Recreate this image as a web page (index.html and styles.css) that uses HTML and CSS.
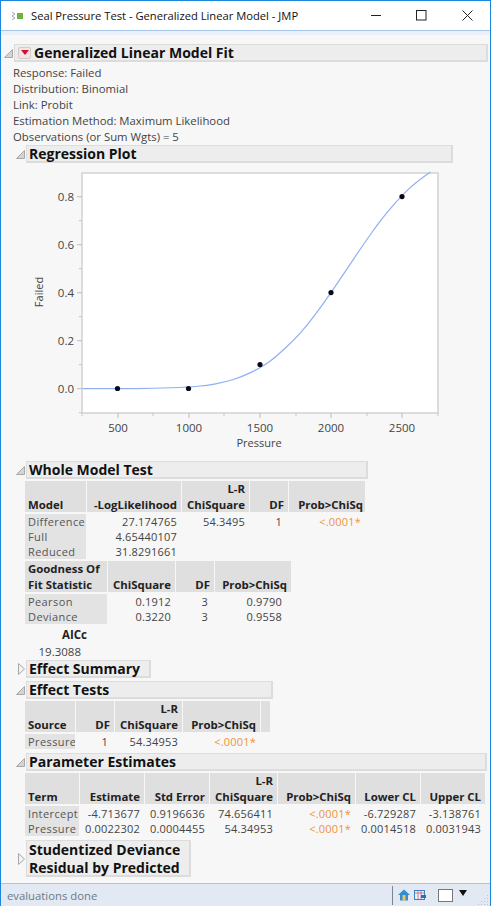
FILE: index.html
```html
<!DOCTYPE html>
<html lang="en">

<head>
    <meta charset="UTF-8">
    <title>Seal Pressure Test - Generalized Linear Model - JMP</title>
    <link rel="stylesheet" href="styles.css">
</head>

<body>
    <div class="window">
        <div class="titlebar">
            <svg class="app-icon" width="12" height="10" viewBox="0 0 12 10">
                <path d="M0 1l3 2-3 2 3 2-3 2" fill="none" stroke="#9aa5b5" />
                <rect x="5" y="2" width="6" height="6" fill="#6cb33f" />
            </svg>
            <span class="title">Seal Pressure Test - Generalized Linear Model - JMP</span>
            <svg class="win-btn btn-min" width="11" height="11" viewBox="0 0 11 11"><path d="M0 5.5h10" stroke="#222" /></svg>
            <svg class="win-btn btn-max" width="11" height="11" viewBox="0 0 11 11"><rect x=".5" y=".5" width="9.5" height="9.5" fill="none" stroke="#222" /></svg>
            <svg class="win-btn btn-close" width="11" height="11" viewBox="0 0 11 11"><path d="M.5.5l10 10M10.5.5l-10 10" stroke="#222" fill="none" /></svg>
        </div>
        <div class="band"></div>

        <div class="content">
            <div class="outline top">
                <svg class="tri" width="9" height="9" viewBox="0 0 9 9"><path d="M8.5.5v8h-8z" fill="#d4d4d4" stroke="#a8a8a8" /></svg>
                <div class="hdr hdr-main">
                    <span class="red-btn"><svg width="8" height="5" viewBox="0 0 8 5"><path d="M0 0h8L4 5z" fill="#d4102a" /></svg></span>
                    Generalized Linear Model Fit
                </div>
            </div>
            <div class="info">
                <div>Response: Failed</div>
                <div>Distribution: Binomial</div>
                <div>Link: Probit</div>
                <div>Estimation Method: Maximum Likelihood</div>
                <div>Observations (or Sum Wgts) = 5</div>
            </div>

            <div class="outline">
                <svg class="tri" width="9" height="9" viewBox="0 0 9 9"><path d="M8.5.5v8h-8z" fill="#d4d4d4" stroke="#a8a8a8" /></svg>
                <div class="hdr w-regress">Regression Plot</div>
            </div>

            <svg class="plot" width="489" height="297" viewBox="0 0 489 297">
                <!-- coordinates below are screen pixels, the group moves them into the svg -->
                <g transform="translate(-1 -164)">
                    <rect x="82" y="173" width="356" height="240" fill="#fff" stroke="#d2d2d2" stroke-width="1.5" />
                    <path d="M77 196.7h5M77 244.7h5M77 292.7h5M77 340.7h5M77 388.7h5M118 413v5M189 413v5M260 413v5M331 413v5M402 413v5" stroke="#bdbdbd" />
                    <path d="M79 220.7h3M79 268.7h3M79 316.7h3M79 364.7h3M79 412.7h3M82 413v3M153 413v3M224 413v3M296 413v3M367 413v3M438 413v3" stroke="#c8c8c8" />
                    <path fill="none" stroke="#8fb0f2" stroke-width="1.2"
                        d="M82.5 388.7L100.25 388.68Q118 388.66 135.75 388.53Q153.5 388.4 171.25 387.75Q189 387.1 197.9 386.25Q206.75 385.4 215.6 383.8Q224.5 382.2 233.4 379.45Q242.25 376.7 251.1 372.4Q260 368.1 267.1 363.3Q274.2 358.5 284.85 348.55Q295.5 338.6 300.85 332.45Q306.2 326.3 311.5 319.45Q316.8 312.6 323.9 302.65Q331 292.7 338.1 282.15Q345.2 271.6 350.55 263.6Q355.9 255.6 361.2 247.75Q366.5 239.9 371.85 232.5Q377.2 225.1 382.5 218.2Q387.8 211.3 394.9 203.3Q402 195.3 409.1 188.65Q416.2 182 430.4 172" />
                    <g fill="#0a0a14">
                        <circle cx="117.5" cy="388.5" r="2.6" />
                        <circle cx="188.5" cy="388.5" r="2.6" />
                        <circle cx="260" cy="364.6" r="2.6" />
                        <circle cx="331" cy="292.6" r="2.6" />
                        <circle cx="402" cy="196.6" r="2.6" />
                    </g>
                    <g class="tick-y">
                        <text x="74" y="201">0.8</text>
                        <text x="74" y="249">0.6</text>
                        <text x="74" y="297">0.4</text>
                        <text x="74" y="345">0.2</text>
                        <text x="74" y="393">0.0</text>
                    </g>
                    <g class="tick-x">
                        <text x="118" y="432">500</text>
                        <text x="189" y="432">1000</text>
                        <text x="260" y="432">1500</text>
                        <text x="331" y="432">2000</text>
                        <text x="402" y="432">2500</text>
                    </g>
                    <text class="axis-label" x="259" y="447">Pressure</text>
                    <text class="axis-label" transform="translate(43 292) rotate(-90)">Failed</text>
                </g>
            </svg>

            <div class="outline">
                <svg class="tri" width="9" height="9" viewBox="0 0 9 9"><path d="M8.5.5v8h-8z" fill="#d4d4d4" stroke="#a8a8a8" /></svg>
                <div class="hdr w-whole">Whole Model Test</div>
            </div>
            <table class="grid whole">
                <colgroup><col class="c61"><col class="c94"><col class="c67"><col class="c38"><col class="c76"></colgroup>
                <tr>
                    <th class="lab">Model</th><th>-LogLikelihood</th><th>L-R<br>ChiSquare</th><th>DF</th><th class="prob">Prob&gt;ChiSq</th>
                </tr>
                <tr><td class="lab">Difference</td><td>27.174765</td><td>54.3495</td><td class="df">1</td><td class="sig">&lt;.0001*</td></tr>
                <tr><td class="lab">Full</td><td>4.65440107</td><td></td><td></td><td></td></tr>
                <tr><td class="lab">Reduced</td><td>31.8291661</td><td></td><td></td><td></td></tr>
            </table>
            <table class="grid goodness">
                <colgroup><col class="c82"><col class="c67"><col class="c38"><col class="c76"></colgroup>
                <tr>
                    <th class="lab">Goodness Of<br>Fit Statistic</th><th>ChiSquare</th><th>DF</th><th>Prob&gt;ChiSq</th>
                </tr>
                <tr><td class="lab">Pearson</td><td>0.1912</td><td class="df">3</td><td class="far">0.9790</td></tr>
                <tr><td class="lab">Deviance</td><td>0.3220</td><td class="df">3</td><td class="far">0.9558</td></tr>
            </table>
            <div class="aicc">
                <div class="aicc-head">AICc</div>
                <div class="aicc-val">19.3088</div>
            </div>

            <div class="outline closed">
                <svg class="tri" width="9" height="12" viewBox="0 0 9 12"><path d="M1.5.5l6 5.5-6 5.5z" fill="#f2f2f2" stroke="#a8a8a8" /></svg>
                <div class="hdr w-summary">Effect Summary</div>
            </div>
            <div class="outline gap3">
                <svg class="tri" width="9" height="9" viewBox="0 0 9 9"><path d="M8.5.5v8h-8z" fill="#d4d4d4" stroke="#a8a8a8" /></svg>
                <div class="hdr w-tests">Effect Tests</div>
            </div>
            <table class="grid tests">
                <colgroup><col class="c50"><col class="c38"><col class="c67"><col class="c77"><col class="c9"></colgroup>
                <tr>
                    <th class="lab">Source</th><th>DF</th><th>L-R<br>ChiSquare</th><th>Prob&gt;ChiSq</th><th></th>
                </tr>
                <tr><td class="lab">Pressure</td><td class="df">1</td><td>54.34953</td><td class="sig">&lt;.0001*</td><td></td></tr>
            </table>

            <div class="outline gap4">
                <svg class="tri" width="9" height="9" viewBox="0 0 9 9"><path d="M8.5.5v8h-8z" fill="#d4d4d4" stroke="#a8a8a8" /></svg>
                <div class="hdr w-params">Parameter Estimates</div>
            </div>
            <table class="grid params">
                <colgroup><col class="c54"><col class="c64"><col class="c64"><col class="c67"><col class="c77"><col class="c64"><col class="c64"></colgroup>
                <tr>
                    <th class="lab">Term</th><th>Estimate</th><th>Std Error</th><th>L-R<br>ChiSquare</th><th>Prob&gt;ChiSq</th><th>Lower CL</th><th>Upper CL</th>
                </tr>
                <tr><td class="lab">Intercept</td><td>-4.713677</td><td>0.9196636</td><td>74.656411</td><td class="sig">&lt;.0001*</td><td>-6.729287</td><td>-3.138761</td></tr>
                <tr><td class="lab">Pressure</td><td>0.0022302</td><td>0.0004455</td><td>54.34953</td><td class="sig">&lt;.0001*</td><td>0.0014518</td><td>0.0031943</td></tr>
            </table>

            <div class="outline closed gap4 tall">
                <svg class="tri" width="9" height="12" viewBox="0 0 9 12"><path d="M1.5.5l6 5.5-6 5.5z" fill="#f2f2f2" stroke="#a8a8a8" /></svg>
                <div class="hdr w-student">Studentized Deviance<br>Residual by Predicted</div>
            </div>
        </div>

        <div class="status">
            <span class="status-text">evaluations done</span>
            <span class="status-sep"></span>
            <svg class="ico-home" width="12" height="12" viewBox="0 0 12 12">
                <path d="M6 .5L0 6h2v5.5h8V6h2z" fill="#2f8fd0" />
                <rect x="4.5" y="6" width="3" height="5.5" fill="#f3c25a" />
            </svg>
            <svg class="ico-sheet" width="12" height="11" viewBox="0 0 12 11">
                <rect x=".5" y=".5" width="10" height="9" fill="#e8f0fa" stroke="#3f7fc0" />
                <path d="M1 3h9M4 1v8M7 1v8" stroke="#c05070" stroke-width=".7" />
                <path d="M7 5h5v3H7z" fill="#2f6fb0" />
            </svg>
            <span class="swatch"></span>
            <svg class="ico-arrow" width="8" height="6" viewBox="0 0 8 6"><path d="M0 0h8L4 6z" fill="#111" /></svg>
            <svg class="grip" width="11" height="11" viewBox="0 0 11 11">
                <path d="M9 1h1v1H9zM6 4h1v1H6zM9 4h1v1H9zM3 7h1v1H3zM6 7h1v1H6zM9 7h1v1H9zM0 10h1v1H0zM3 10h1v1H3zM6 10h1v1H6zM9 10h1v1H9z" fill="#bcc4d0" />
            </svg>
        </div>
    </div>
</body>

</html>
```

FILE: styles.css
```css
html,
body {
    margin: 0;
    padding: 0;
}

body {
    width: 491px;
    height: 906px;
    overflow: hidden;
    font-family: "Open Sans", "Noto Sans", sans-serif;
    font-size: 11.5px;
    color: #444;
}

.window {
    box-sizing: border-box;
    width: 491px;
    height: 906px;
    display: flex;
    flex-direction: column;
    border-left: 1px solid #1a86dc;
    border-right: 1px solid #1a86dc;
    background-color: #f7f7f7;
}

.titlebar {
    height: 30px;
    flex: none;
    display: flex;
    align-items: center;
    background-color: #fff;
    border-top: 1px solid #1a86dc;
    box-sizing: border-box;
    color: #111;
    font-size: 11.2px;
}

.app-icon {
    margin-left: 11px;
}

.title {
    margin-left: 7px;
    flex: 1;
}

.win-btn {
    flex: none;
}

.btn-min {
    margin-right: 34px;
}

.btn-max {
    margin-right: 35px;
}

.btn-close {
    margin-right: 17px;
}

.band {
    height: 5px;
    flex: none;
    background-color: #eaf0f8;
    border-top: 1px solid #a9c6e6;
    box-sizing: border-box;
}

.content {
    flex: 1;
    padding-top: 9px;
}

.outline {
    display: flex;
    align-items: center;
    height: 18px;
    margin-left: 15px;
}

.outline .tri {
    flex: none;
    margin-right: 1px;
}

.outline.top {
    margin-left: 3px;
}

.outline.gap3 {
    margin-top: 3px;
}

.outline.gap4 {
    margin-top: 4px;
}

.outline.tall {
    height: 37px;
}

.hdr {
    box-sizing: border-box;
    height: 18px;
    padding-left: 2px;
    background-color: #ededed;
    border: 1px solid #dcdcdc;
    border-right-width: 2px;
    border-bottom-width: 2px;
    color: #111;
    font-size: 14px;
    font-weight: 700;
    line-height: 15px;
    white-space: nowrap;
}

.hdr-main {
    width: 474px;
    display: flex;
    align-items: center;
    gap: 3px;
    padding-left: 3px;
}

.red-btn {
    display: inline-flex;
    align-items: center;
    justify-content: center;
    width: 13px;
    height: 12px;
    background-color: #f0e6e6;
    border: 1px solid #d8c8c8;
    border-radius: 2px;
    box-sizing: border-box;
}

.w-regress {
    width: 427px;
}

.w-whole {
    width: 342px;
}

.w-summary {
    width: 125px;
}

.w-tests {
    width: 247px;
}

.w-params {
    width: 461px;
}

.w-student {
    width: 165px;
    height: 37px;
    line-height: 18px;
}

.outline.closed .tri {
    margin-left: 1px;
    margin-right: 0;
}

.info {
    margin: 3px 0 0 12px;
    font-size: 11.35px;
    line-height: 16px;
}

.plot {
    display: block;
    margin-top: 1px;
}

.tick-y {
    text-anchor: end;
    font-size: 11.5px;
    fill: #444;
}

.tick-x {
    text-anchor: middle;
    font-size: 11.5px;
    fill: #444;
}

.axis-label {
    text-anchor: middle;
    font-size: 11px;
    fill: #444;
}

.grid {
    table-layout: fixed;
    border-collapse: separate;
    border-spacing: 1px 0;
    margin: 2px 0 0 23px;
    font-size: 11px;
    line-height: 15px;
}

.grid th,
.grid td {
    box-sizing: border-box;
    padding: 0 4px 0 0;
    text-align: right;
    white-space: nowrap;
    overflow: hidden;
}

.grid th {
    height: 33px;
    vertical-align: bottom;
    background-color: #dfdfdf;
    background-clip: padding-box;
    border-bottom: 2px solid transparent;
    color: #222;
    font-size: 11.4px;
    font-weight: 700;
    line-height: 15.5px;
}

.grid td {
    height: 15px;
    letter-spacing: .2px;
}

.grid .lab {
    text-align: left;
    padding-left: 3px;
    padding-right: 0;
}

.grid td.lab {
    background-color: #e3e3e3;
    color: #555;
    letter-spacing: .4px;
}

.grid .df {
    padding-right: 6px;
}

.grid .far {
    padding-right: 9px;
}

.grid .prob {
    padding-right: 2px;
}

.grid .sig {
    color: #ee9440;
}

/* fixed layout needs a real table width: columns plus the 1px spacing */
.whole {
    width: 342px;
}

.goodness {
    width: 268px;
}

.tests {
    width: 247px;
}

.params {
    width: 462px;
}

.c9 {
    width: 9px;
}

.c38 {
    width: 38px;
}

.c50 {
    width: 50px;
}

.c54 {
    width: 54px;
}

.c61 {
    width: 61px;
}

.c64 {
    width: 64px;
}

.c67 {
    width: 67px;
}

.c76 {
    width: 76px;
}

.c77 {
    width: 77px;
}

.c82 {
    width: 82px;
}

.c94 {
    width: 94px;
}

.aicc {
    width: 62px;
    margin: 2px 0 0 24px;
    text-align: right;
    line-height: 17px;
}

.aicc-head {
    color: #222;
    font-weight: 700;
}

.aicc-val {
    padding-right: 6px;
}

.status {
    box-sizing: border-box;
    height: 23px;
    flex: none;
    display: flex;
    align-items: center;
    background-color: #e2e9f3;
    border-top: 1px solid #b8c0dc;
}

.status-text {
    margin-left: 6px;
    flex: 1;
    color: #6b7a8c;
    font-size: 11.3px;
}

.status-sep {
    width: 1px;
    height: 19px;
    background-color: #7a8494;
    margin-right: 5px;
}

.ico-sheet {
    margin-left: 4px;
}

.swatch {
    box-sizing: border-box;
    width: 15px;
    height: 13px;
    margin-left: 12px;
    background-color: #fff;
    border: 1px solid #777;
}

.ico-arrow {
    margin: 0 0 4px 6px;
}

.grip {
    margin: 8px 1px 0 11px;
}
```
